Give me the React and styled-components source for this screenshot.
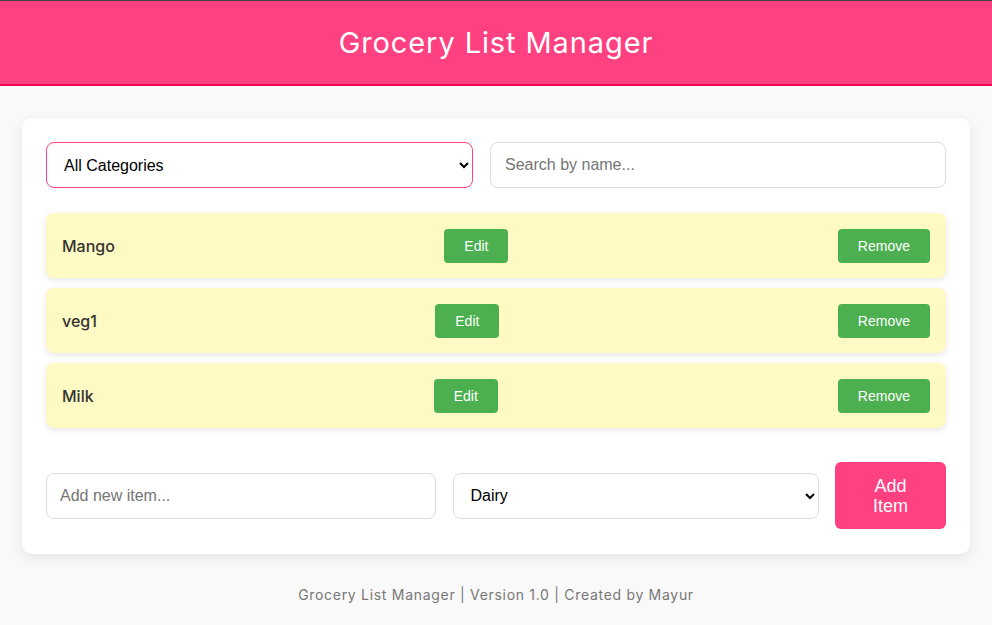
import React, { useState } from 'react';
import styled, { createGlobalStyle } from 'styled-components';

const GlobalStyle = createGlobalStyle`
  body {
    margin: 0;
    background: #f9f9f9;
    font-family: Inter, "Noto Sans", sans-serif;
    color: #333;
  }
`;

const Header = styled.header`
  background: #ff4081;
  border-top: 1px solid #444;
  border-bottom: 2px solid #f50057;
  height: 83px;
  display: flex;
  align-items: center;
  justify-content: center;
`;

const Title = styled.h1`
  margin: 0;
  color: #fff;
  font-size: 29px;
  font-weight: 400;
  letter-spacing: 0.9px;
`;

const Main = styled.main`
  padding: 32px 22px 0;
`;

const Card = styled.section`
  background: #fff;
  border-radius: 10px;
  box-shadow: 0 4px 14px rgba(0, 0, 0, 0.08);
  padding: 24px 24px 25px;
`;

const Filters = styled.div`
  display: grid;
  grid-template-columns: 427px 1fr;
  gap: 17px;
  margin-bottom: 25px;
`;

const Field = styled.input`
  box-sizing: border-box;
  height: 46px;
  padding: 0 ${(p) => p.$pad || 14}px;
  border: 1px solid #ddd;
  border-radius: 8px;
  font-family: "Liberation Sans", Arial, sans-serif;
  font-size: 16px;
  color: #000;
  background: #fff;
  outline: none;
  &::placeholder {
    color: #757575;
  }
`;

const Select = styled.select`
  box-sizing: border-box;
  height: 46px;
  padding: 0 13px;
  border: 1px solid ${(p) => (p.$accent ? '#ff4081' : '#ddd')};
  border-radius: 8px;
  font-family: "Liberation Sans", Arial, sans-serif;
  font-size: 16px;
  color: #000;
  background: #fff;
  outline: none;
`;

const List = styled.ul`
  list-style: none;
  margin: 0;
  padding: 0;
  display: flex;
  flex-direction: column;
  gap: 10px;
`;

const Item = styled.li`
  display: flex;
  align-items: center;
  justify-content: space-between;
  height: 65px;
  box-sizing: border-box;
  padding: 0 16px;
  background: #fff9c4;
  border-radius: 8px;
  box-shadow: 0 2px 6px rgba(0, 0, 0, 0.1);
`;

const Name = styled.span`
  font-size: 16px;
  font-weight: 500;
  color: #333;
`;

const SmallButton = styled.button`
  border: none;
  border-radius: 4px;
  background: #4caf50;
  color: #fff;
  font-family: "Liberation Sans", Arial, sans-serif;
  font-size: 14px;
  line-height: 16px;
  padding: 9px 20px;
  cursor: pointer;
`;

const AddRow = styled.div`
  display: grid;
  grid-template-columns: 390px 366px 1fr;
  gap: 16.5px;
  align-items: center;
  margin-top: 34px;
`;

const AddButton = styled.button`
  height: 67px;
  border: none;
  border-radius: 6px;
  background: #ff4081;
  color: #fff;
  font-family: "Liberation Sans", Arial, sans-serif;
  font-size: 18px;
  line-height: 20px;
  padding: 0 30px;
  cursor: pointer;
`;

const Footer = styled.footer`
  text-align: center;
  padding: 32px 0;
  font-size: 14px;
  color: #777;
  letter-spacing: 0.7px;
`;

const items = [
  { id: 1, name: 'Mango' },
  { id: 2, name: 'veg1' },
  { id: 3, name: 'Milk' },
];

export default function App() {
  const [category, setCategory] = useState('all');
  const [newCategory, setNewCategory] = useState('Dairy');

  return (
    <>
      <GlobalStyle />
      <Header>
        <Title>Grocery List Manager</Title>
      </Header>
      <Main>
        <Card>
          <Filters>
            <Select $accent value={category} onChange={(e) => setCategory(e.target.value)}>
              <option value="all">All Categories</option>
              <option value="Fruits">Fruits</option>
              <option value="Vegetables">Vegetables</option>
              <option value="Dairy">Dairy</option>
            </Select>
            <Field placeholder="Search by name..." />
          </Filters>
          <List>
            {items.map((item) => (
              <Item key={item.id}>
                <Name>{item.name}</Name>
                <SmallButton>Edit</SmallButton>
                <SmallButton>Remove</SmallButton>
              </Item>
            ))}
          </List>
          <AddRow>
            <Field $pad={13} placeholder="Add new item..." />
            <Select value={newCategory} onChange={(e) => setNewCategory(e.target.value)}>
              <option value="Fruits">Fruits</option>
              <option value="Vegetables">Vegetables</option>
              <option value="Dairy">Dairy</option>
            </Select>
            <AddButton>Add Item</AddButton>
          </AddRow>
        </Card>
      </Main>
      <Footer>Grocery List Manager | Version 1.0 | Created by Mayur</Footer>
    </>
  );
}
